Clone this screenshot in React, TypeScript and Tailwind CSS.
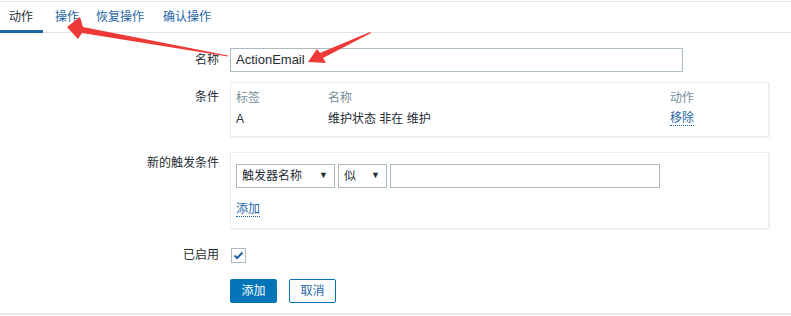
import React from "react";

const font = { fontFamily: '"Liberation Sans", "Noto Sans CJK SC", sans-serif' };

function Select({ label, width }: { label: string; width: number }) {
  return (
    <div
      className="h-[24px] border border-[#acbbc2] bg-white flex items-center justify-between pl-[5px] pr-[6px] text-[12px] text-[#1f2c33]"
      style={{ width }}
    >
      <span>{label}</span>
      <span className="text-[9px] text-[#1f2c33]">▼</span>
    </div>
  );
}

export default function App() {
  return (
    <div className="relative w-[791px] h-[316px] bg-white text-[12px] text-[#1f2c33] overflow-hidden" style={font}>
      <div className="h-[2px] border-b border-[#e3e7ea]" />
      <div className="flex h-[31px] border-b border-[#dfe4e7] items-stretch">
        <div className="relative px-[9px] flex items-center text-[#1f2c33] w-[43px]">
          动作
          <div className="absolute left-0 right-0 bottom-[-1px] h-[3px] bg-[#1f65a6]" />
        </div>
        <div className="flex items-center ml-[12px] text-[#1f65a6]">操作</div>
        <div className="flex items-center ml-[17px] text-[#1f65a6]">恢复操作</div>
        <div className="flex items-center ml-[19px] text-[#1f65a6]">确认操作</div>
      </div>

      <div className="flex flex-col pt-[15px]">
        <div className="flex items-center">
          <div className="w-[219px] text-right">名称</div>
          <div className="ml-[11px] w-[453px] h-[24px] border border-[#acbbc2] flex items-center px-[5px] text-[13px]">
            ActionEmail
          </div>
        </div>

        <div className="flex mt-[10px]">
          <div className="w-[219px] text-right pt-[6px]">条件</div>
          <div className="ml-[11px] w-[539px] h-[55px] border border-[#ebeef0] shadow-[1px_1px_2px_rgba(0,0,0,0.06)] px-[5px] pt-[5px]">
            <div className="flex h-[20px] items-center text-[#768d99]">
              <div className="w-[92px]">标签</div>
              <div className="w-[342px]">名称</div>
              <div>动作</div>
            </div>
            <div className="flex h-[21px] items-center">
              <div className="w-[92px]">A</div>
              <div className="w-[342px]">维护状态 非在 维护</div>
              <div className="text-[#1f65a6] border-b border-dotted border-[#1f65a6] leading-[14px]">移除</div>
            </div>
          </div>
        </div>

        <div className="flex mt-[15px]">
          <div className="w-[219px] text-right pt-[2px]">新的触发条件</div>
          <div className="ml-[11px] w-[539px] h-[77px] border border-[#ebeef0] shadow-[1px_1px_2px_rgba(0,0,0,0.06)] px-[5px] pt-[11px]">
            <div className="flex gap-[3px]">
              <Select label="触发器名称" width={99} />
              <Select label="似" width={49} />
              <div className="w-[270px] h-[24px] border border-[#acbbc2]" />
            </div>
            <div className="mt-[12px]">
              <span className="text-[#1f65a6] border-b border-dotted border-[#1f65a6]">添加</span>
            </div>
          </div>
        </div>

        <div className="flex items-center mt-[17px]">
          <div className="w-[219px] text-right">已启用</div>
          <div className="ml-[12px] w-[15px] h-[15px] border border-[#acbbc2] flex items-center justify-center">
            <svg width="11" height="9" viewBox="0 0 11 9">
              <path d="M1.5 4.5 L4.2 7 L9.5 1.5" fill="none" stroke="#1f65a6" strokeWidth="2" />
            </svg>
          </div>
        </div>

        <div className="flex mt-[15px] ml-[230px] gap-[12px]">
          <div className="w-[47px] h-[24px] rounded-[2px] bg-[#0275b8] text-white flex items-center justify-center">添加</div>
          <div className="w-[47px] h-[24px] rounded-[2px] border border-[#0275b8] text-[#1f65a6] bg-white flex items-center justify-center">取消</div>
        </div>
      </div>

      <div className="absolute left-0 right-0 top-[313px] h-[2px] bg-[#e6e9eb]" />

      <svg className="absolute left-0 top-0 pointer-events-none" width="791" height="316">
        <polygon points="67,27 80,17 83,27 228,55.5 228,56.5 82,33 78,39" fill="#ee3a36" />
        <polygon points="308,62 317,49 320,53 370,32 371,33 323,58 326,63" fill="#ee3a36" />
      </svg>
    </div>
  );
}
